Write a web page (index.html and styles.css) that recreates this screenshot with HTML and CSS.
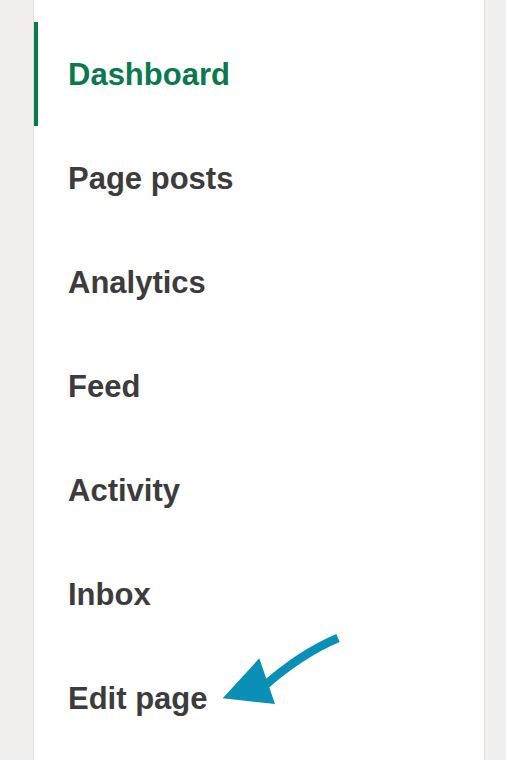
FILE: index.html
```html
<!DOCTYPE html>
<html lang="en">
<head>
    <meta charset="UTF-8">
    <meta name="viewport" content="width=device-width, initial-scale=1.0">
    <title>Menu</title>
    <link rel="stylesheet" href="styles.css">
</head>
<body>
    <div class="panel">
        <ul class="menu">
            <li class="menu-item active">Dashboard</li>
            <li class="menu-item">Page posts</li>
            <li class="menu-item">Analytics</li>
            <li class="menu-item">Feed</li>
            <li class="menu-item">Activity</li>
            <li class="menu-item">Inbox</li>
            <li class="menu-item">Edit page</li>
        </ul>
    </div>

    <!-- annotation arrow -->
    <svg class="arrow" width="160" height="100" viewBox="0 0 160 100">
        <path d="M138 18 Q100 34 62 68" fill="none" stroke="#0a90b6" stroke-width="8.5" stroke-linecap="butt"/>
        <polygon points="22.7,78.3 59.3,38.3 75,84" fill="#0a90b6"/>
    </svg>
</body>
</html>
```

FILE: styles.css
```css
body {
    margin: 0;
    background-color: #f1f0ee;
    font-family: "Liberation Sans", Arial, sans-serif;
}
.panel {
    margin-left: 33px;
    width: 450px;
    min-height: 760px;
    background-color: #fff;
    border-left: 1px solid #dcdcdc;
    border-right: 1px solid #dcdcdc;
}
.menu {
    list-style: none;
    margin: 0;
    padding: 22px 0 0;
}
.menu-item {
    display: flex;
    align-items: center;
    height: 104px;
    padding-left: 30px;
    padding-top: 2px;
    box-sizing: border-box;
    border-left: 4px solid transparent;
    font-size: 31px;
    font-weight: bold;
    color: #3c3c3c;
}
.menu-item.active {
    border-left-color: #0a7a4e;
    color: #0a7a4e;
}
.arrow {
    position: absolute;
    left: 200px;
    top: 620px;
}
```
